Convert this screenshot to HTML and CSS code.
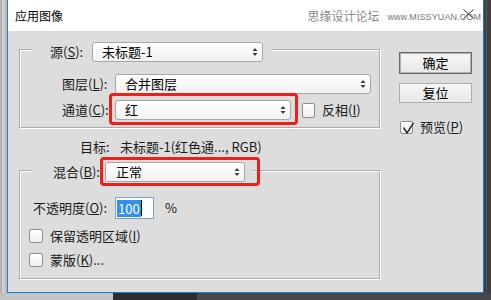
FILE: index.html
```html
<!DOCTYPE html>
<html lang="zh-CN">
<head>
    <meta charset="UTF-8">
    <meta name="viewport" content="width=device-width, initial-scale=1.0">
    <title>应用图像</title>
    <link rel="stylesheet" href="styles.css">
</head>
<body>
    <div class="dialog">
        <div class="titlebar">
            <span class="title">应用图像</span>
            <span class="watermark">思缘设计论坛 <small>www.MISSYUAN.COM</small></span>
            <svg class="close" width="11" height="10" viewBox="0 0 11 10">
                <path d="M0.5 0.5 L10.5 9.5 M10.5 0.5 L0.5 9.5" stroke="#333" stroke-width="1" fill="none"/>
            </svg>
        </div>

        <div class="content">
            <div class="main">
                <fieldset class="group group-source">
                    <legend>
                        <span class="legend-label">源(<u>S</u>):</span>
                        <div class="select w-source">未标题-1<svg class="arrow" width="6" height="10" viewBox="0 0 6 10"><path d="M0.5 4 L3 1 L5.5 4 Z M0.5 6 L3 9 L5.5 6 Z" fill="#3c3c3c"/></svg></div>
                    </legend>
                    <div class="row">
                        <span class="label-col">图层(<u>L</u>):</span>
                        <div class="select w-layer">合并图层<svg class="arrow" width="6" height="10" viewBox="0 0 6 10"><path d="M0.5 4 L3 1 L5.5 4 Z M0.5 6 L3 9 L5.5 6 Z" fill="#3c3c3c"/></svg></div>
                    </div>
                    <div class="row">
                        <span class="label-col">通道(<u>C</u>):</span>
                        <span class="mark mark-channel">
                            <div class="select w-channel">红<svg class="arrow" width="6" height="10" viewBox="0 0 6 10"><path d="M0.5 4 L3 1 L5.5 4 Z M0.5 6 L3 9 L5.5 6 Z" fill="#3c3c3c"/></svg></div>
                        </span>
                        <span class="check check-invert"></span>
                        <span class="check-text">反相(<u>I</u>)</span>
                    </div>
                </fieldset>

                <div class="target">
                    <span class="target-label">目标:</span>
                    <span>未标题-1(红色通..., RGB)</span>
                </div>

                <fieldset class="group group-blend">
                    <legend>
                        <span class="legend-label">混合(<u>B</u>):</span>
                        <span class="mark mark-blend">
                            <div class="select w-blend">正常<svg class="arrow" width="6" height="10" viewBox="0 0 6 10"><path d="M0.5 4 L3 1 L5.5 4 Z M0.5 6 L3 9 L5.5 6 Z" fill="#3c3c3c"/></svg></div>
                        </span>
                    </legend>
                    <div class="row opacity">
                        <span class="opacity-label">不透明度(<u>O</u>):</span>
                        <div class="field"><span class="sel">100</span><span class="caret"></span></div>
                        <span class="unit">%</span>
                    </div>
                    <div class="row check-row">
                        <span class="check"></span>
                        <span class="check-text">保留透明区域(<u>I</u>)</span>
                    </div>
                    <div class="row check-row">
                        <span class="check"></span>
                        <span class="check-text">蒙版(<u>K</u>)...</span>
                    </div>
                </fieldset>
            </div>

            <div class="side">
                <button class="btn btn-default">确定</button>
                <button class="btn">复位</button>
                <div class="row preview">
                    <span class="check check-small">
                        <svg width="14" height="13" viewBox="0 0 14 13"><path d="M2.5 5.5 L6 11 L12.5 0.8" stroke="#222" stroke-width="1.4" fill="none"/></svg>
                    </span>
                    <span class="check-text">预览(<u>P</u>)</span>
                </div>
            </div>
        </div>
    </div>
</body>
</html>
```

FILE: styles.css
```css
* {
    box-sizing: border-box;
}

body {
    margin: 0;
    height: 300px;
    overflow: hidden;
    font-family: "Noto Sans CJK SC", "Microsoft YaHei", sans-serif;
    font-size: 13px;
    line-height: 18px;
    color: #1b1b1b;
    background:
        linear-gradient(90deg, #c3c3c3 0 113px, #2d2d2d 113px 197px, #474747 197px) left bottom / 100% 7px no-repeat,
        linear-gradient(90deg, #b4b4b4 0 2px, #cdcdcd 2px 5px, #bcbcbc 5px 7px, transparent 7px 486px, #565656 486px 487px, transparent 487px),
        #3e3e3e;
}

u {
    text-underline-offset: 1px;
}

.dialog {
    width: 477px;
    height: 293px;
    margin-left: 7px;
    border: 1px solid #1a7cd6;
    border-top: 0;
    background: #dddddd;
    display: flex;
    flex-direction: column;
}

/* title bar */
.titlebar {
    position: relative;
    flex: none;
    height: 31px;
    padding: 0 2px 0 7px;
    background: #fff;
    display: flex;
    align-items: center;
}

.title {
    font-size: 12px;
    color: #000;
}

.watermark {
    margin-left: auto;
    font-size: 12px;
    color: #8b8b8b;
    display: flex;
    align-items: center;
    gap: 8px;
}

.watermark small {
    font-family: "Liberation Sans", Arial, sans-serif;
    font-size: 9px;
    letter-spacing: 0.1px;
    color: #777;
    margin-top: 2px;
}

.close {
    position: absolute;
    right: 9px;
    top: 9px;
}

/* body */
.content {
    flex: 1;
    display: flex;
    padding: 7px 0 0 11px;
}

.main {
    width: 362px;
    flex: none;
}

.side {
    width: 73px;
    margin-left: 18px;
    padding-top: 14px;
    display: flex;
    flex-direction: column;
}

.group {
    margin: 0;
    min-width: 0;
    border: 2px groove #fff;
}

.group legend {
    margin-left: 4px;
    display: flex;
    align-items: center;
}

.group-source {
    padding: 12px 0 7px 8px;
}

.group-source legend {
    padding: 4px 9px 0 17px;
}

.group-source .legend-label {
    width: 42px;
}

.group-blend {
    margin-top: 4px;
    padding: 15px 0 6px 8px;
}

.group-blend legend {
    padding: 2px 8px 0 20px;
}

.group-blend .legend-label {
    width: 52px;
}

.row {
    display: flex;
    align-items: center;
}

.group-source .row {
    margin-left: 33px;
}

.group-source .row + .row {
    margin-top: 6px;
}

.label-col {
    width: 53px;
    flex: none;
}

/* select boxes */
.select {
    height: 20px;
    flex: none;
    display: flex;
    align-items: center;
    justify-content: space-between;
    padding: 0 4px 0 9px;
    border: 1px solid #a6a6a6;
    border-radius: 3px;
    background: linear-gradient(#ffffff, #f2f2f2);
    color: #000;
}

.w-source { width: 171px; }
.w-layer { width: 256px; }
.w-channel { width: 176px; }
.w-blend { width: 140px; padding-left: 10px; }

/* red highlight frames */
.mark {
    display: flex;
    flex: none;
    border: 3px solid #ec1f1a;
    border-radius: 4px;
}

.mark-channel {
    padding: 4px 4px 2px 3px;
    margin: -7px -7px -5px -6px;
}

.mark-blend {
    padding: 2px 12px 1px 2px;
    margin: -5px -15px -4px -5px;
}

/* checkboxes */
.check {
    width: 14px;
    height: 14px;
    flex: none;
    border: 1px solid #8e8e8e;
    border-radius: 2px;
    background: linear-gradient(#ffffff, #eeeeee);
}

.check-invert {
    width: 13px;
    height: 15px;
    margin-left: 11px;
}

.check-invert + .check-text {
    margin-left: 7px;
}

.check-small {
    width: 13px;
    height: 13px;
    position: relative;
}

.check-small svg {
    position: absolute;
    left: 0;
    top: 0;
}

.check-row {
    height: 24px;
}

.check-row .check-text {
    margin-left: 7px;
}

.opacity {
    margin-left: 4px;
    height: 22px;
    margin-bottom: 5px;
}

.opacity-label {
    width: 82px;
    flex: none;
}

.field {
    width: 39px;
    height: 22px;
    padding: 0 0 0 1px;
    border: 1px solid #7d9fcf;
    background: #fff;
    display: flex;
    align-items: center;
}

.field .sel {
    padding: 0 1px;
    line-height: 17px;
    background: #3390f0;
    color: #fff;
}

.caret {
    width: 1px;
    height: 16px;
    background: #000;
}

.unit {
    margin-left: 11px;
}

/* target line */
.target {
    height: 18px;
    margin-top: 9px;
    padding-left: 61px;
    display: flex;
}

.target-label {
    width: 40px;
}

/* buttons */
.btn {
    height: 20px;
    padding: 0;
    font: inherit;
    color: #000;
    border: 1px solid #adadad;
    background: linear-gradient(#f7f7f7, #e8e8e8);
}

.btn-default {
    height: 22px;
    border-color: #6c6c6c;
    box-shadow: inset 0 0 0 1px #b0b0b0;
}

.btn + .btn {
    margin-top: 9px;
}

.preview {
    height: 20px;
    margin: 14px 0 0 1px;
}

.preview .check-text {
    margin-left: 7px;
}
```
